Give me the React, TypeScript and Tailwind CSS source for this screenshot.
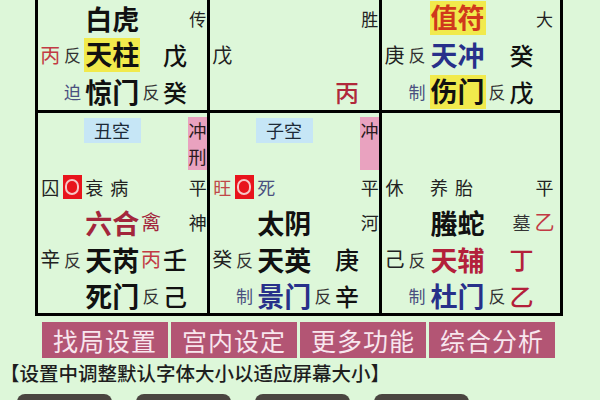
import React from "react";

type Slots = {
  a?: React.ReactNode;
  b?: React.ReactNode;
  c?: React.ReactNode;
  d?: React.ReactNode;
  e?: React.ReactNode;
  f?: React.ReactNode;
  h: string;
};

const font = { fontFamily: '"Noto Sans CJK SC", "Noto Sans", sans-serif' };

function Line({ a, b, c, d, e, f, h }: Slots) {
  return (
    <div className={`flex items-center pl-[2px] ${h}`}>
      <div className="w-[21px] flex justify-center">{a}</div>
      <div className="w-[24px] flex justify-center">{b}</div>
      <div className="w-[57px] flex justify-center">{c}</div>
      <div className="w-[22px] flex justify-center">{d}</div>
      <div className="w-[27px] flex justify-center">{e}</div>
      <div className="w-[19px] flex justify-center">{f}</div>
    </div>
  );
}

const Big = ({ children, cls = "text-[#111]" }: { children: React.ReactNode; cls?: string }) => (
  <span className={`text-[27px] leading-none font-bold ${cls}`}>{children}</span>
);
const Mid = ({ children, cls = "text-[#111]" }: { children: React.ReactNode; cls?: string }) => (
  <span className={`text-[24px] leading-none font-medium ${cls}`}>{children}</span>
);
const Side = ({ children, cls = "text-[#222]" }: { children: React.ReactNode; cls?: string }) => (
  <span className={`text-[20px] leading-none ${cls}`}>{children}</span>
);
const Small = ({ children, cls = "text-[#333]" }: { children: React.ReactNode; cls?: string }) => (
  <span className={`text-[17px] leading-none ${cls}`}>{children}</span>
);
const Tiny = ({ children, cls = "text-[#222]" }: { children: React.ReactNode; cls?: string }) => (
  <span className={`text-[18px] leading-none ${cls}`}>{children}</span>
);

const RedO = () => (
  <span className="w-[19px] h-[24px] bg-[#e8141c] flex items-center justify-center">
    <span className="w-[14px] h-[16px] rounded-full border-2 border-[#f6c6c6]" />
  </span>
);

const Hl = ({ children, cls = "" }: { children: React.ReactNode; cls?: string }) => (
  <span className={`px-[1px] py-[2px] bg-[#f1ea4c] ${cls}`}>{children}</span>
);

function TopCell({ lines, right }: { lines: Slots[]; right?: boolean }) {
  return (
    <div className={`w-[172px] h-[110px] border-black ${right ? "" : "border-r-[3px]"}`}>
      {lines.map((l, i) => (
        <Line key={i} {...l} />
      ))}
    </div>
  );
}

function BottomCell({
  kong,
  chong,
  lines,
  right,
}: {
  kong?: string;
  chong?: string[];
  lines: Slots[];
  right?: boolean;
}) {
  return (
    <div className={`w-[172px] h-[200px] border-black ${right ? "" : "border-r-[3px]"}`}>
      <div className="h-[57px] flex pl-[2px]">
        <div className="w-[45px]" />
        <div className="w-[57px] pt-[5px] flex justify-center">
          {kong && (
            <span className="w-[58px] h-[25px] bg-[#c6e6f6] flex items-center justify-center text-[18px] text-[#1c2a38]">
              {kong}
            </span>
          )}
        </div>
        <div className="w-[49px]" />
        <div className="w-[19px] pt-[4px] flex justify-center">
          {chong && (
            <span className="w-[19px] bg-[#e9a2bf] flex flex-col items-center text-[18px] leading-[26px] text-[#2a1a20]">
              {chong.map((c) => (
                <span key={c}>{c}</span>
              ))}
            </span>
          )}
        </div>
      </div>
      {lines.map((l, i) => (
        <Line key={i} {...l} />
      ))}
    </div>
  );
}

export default function App() {
  const blue = "text-[#27308a]";
  const grey = "text-[#4a5080]";
  const red = "text-[#c23a44]";
  const maroon = "text-[#a3263c]";
  const rowH = ["h-[34px]", "h-[36px]", "h-[38px]", "h-[35px]"];

  return (
    <div className="w-[600px] h-[400px] overflow-hidden bg-[#ddf7d9]" style={font}>
      <div className="ml-[35px] w-[528px] border-l-[3px] border-r-[3px] border-black">
        <div className="flex border-b-[3px] border-black">
          <TopCell
            lines={[
              { h: "h-[36px]", c: <Big>白虎</Big>, f: <Small cls="text-[#222]">传</Small> },
              {
                h: "h-[37px]",
                a: <Side cls={red}>丙</Side>,
                b: <Small>反</Small>,
                c: <Hl><Big>天柱</Big></Hl>,
                e: <Mid>戊</Mid>,
              },
              {
                h: "h-[37px]",
                b: <Small cls={grey}>迫</Small>,
                c: <Big>惊门</Big>,
                d: <Small>反</Small>,
                e: <Mid>癸</Mid>,
              },
            ]}
          />
          <TopCell
            lines={[
              { h: "h-[36px]", f: <Small cls="text-[#222]">胜</Small> },
              { h: "h-[37px]", a: <Side>戊</Side> },
              { h: "h-[37px]", e: <Mid cls="text-[#b0283a]">丙</Mid> },
            ]}
          />
          <TopCell
            right
            lines={[
              {
                h: "h-[36px]",
                c: <Hl><Big cls="text-[#d0381c]">值符</Big></Hl>,
                f: <Small cls="text-[#222]">大</Small>,
              },
              {
                h: "h-[37px]",
                a: <Side>庚</Side>,
                b: <Small>反</Small>,
                c: <Big cls={blue}>天冲</Big>,
                e: <Mid>癸</Mid>,
              },
              {
                h: "h-[37px]",
                b: <Small cls={grey}>制</Small>,
                c: <Hl><Big>伤门</Big></Hl>,
                d: <Small>反</Small>,
                e: <Mid>戊</Mid>,
              },
            ]}
          />
        </div>
        <div className="flex border-b-[3px] border-black">
          <BottomCell
            kong="丑空"
            chong={["冲", "刑"]}
            lines={[
              {
                h: rowH[0],
                a: <Tiny>囚</Tiny>,
                b: <RedO />,
                c: (
                  <span className="w-full flex gap-[7px] pl-[1px]">
                    <Tiny>衰</Tiny>
                    <Tiny>病</Tiny>
                  </span>
                ),
                f: <Tiny>平</Tiny>,
              },
              {
                h: rowH[1],
                c: <Big cls={maroon}>六合</Big>,
                d: <Side cls={maroon}>禽</Side>,
                f: <Tiny>神</Tiny>,
              },
              {
                h: rowH[2],
                a: <Side>辛</Side>,
                b: <Small>反</Small>,
                c: <Big>天芮</Big>,
                d: <Side cls={red}>丙</Side>,
                e: <Mid>壬</Mid>,
              },
              {
                h: rowH[3],
                c: <Big>死门</Big>,
                d: <Small>反</Small>,
                e: <Mid>己</Mid>,
              },
            ]}
          />
          <BottomCell
            kong="子空"
            chong={["冲"]}
            lines={[
              {
                h: rowH[0],
                a: <Tiny cls="text-[#c04848]">旺</Tiny>,
                b: <RedO />,
                c: (
                  <span className="w-full flex pl-[1px]">
                    <Tiny cls={grey}>死</Tiny>
                  </span>
                ),
                f: <Tiny>平</Tiny>,
              },
              { h: rowH[1], c: <Big>太阴</Big>, f: <Tiny>河</Tiny> },
              {
                h: rowH[2],
                a: <Side>癸</Side>,
                b: <Small>反</Small>,
                c: <Big>天英</Big>,
                e: <Mid>庚</Mid>,
              },
              {
                h: rowH[3],
                b: <Small cls={grey}>制</Small>,
                c: <Big cls={blue}>景门</Big>,
                d: <Small>反</Small>,
                e: <Mid>辛</Mid>,
              },
            ]}
          />
          <BottomCell
            right
            lines={[
              {
                h: rowH[0],
                a: <Tiny>休</Tiny>,
                c: (
                  <span className="w-full flex gap-[7px] pl-[1px]">
                    <Tiny>养</Tiny>
                    <Tiny>胎</Tiny>
                  </span>
                ),
                f: <Tiny>平</Tiny>,
              },
              {
                h: rowH[1],
                c: <Big>螣蛇</Big>,
                e: <Tiny cls="text-[#333]">墓</Tiny>,
                f: <Side cls={red}>乙</Side>,
              },
              {
                h: rowH[2],
                a: <Side>己</Side>,
                b: <Small>反</Small>,
                c: <Big cls="text-[#b3203a]">天辅</Big>,
                e: <Mid cls="text-[#b3203a]">丁</Mid>,
              },
              {
                h: rowH[3],
                b: <Small cls={grey}>制</Small>,
                c: <Big cls={blue}>杜门</Big>,
                d: <Small>反</Small>,
                e: <Mid cls="text-[#b3203a]">乙</Mid>,
              },
            ]}
          />
        </div>
      </div>

      <div className="mt-[6px] ml-[42px] flex gap-[3px]">
        {["找局设置", "宫内设定", "更多功能", "综合分析"].map((t) => (
          <div
            key={t}
            className="w-[126px] h-[36px] bg-[#b35574] flex items-center justify-center text-[25px] leading-none text-[#f8e6ee] tracking-[1px]"
          >
            {t}
          </div>
        ))}
      </div>

      <div className="mt-[2px] text-[19.5px] leading-[25px] font-medium text-[#1e1e1e] whitespace-nowrap">
        【设置中调整默认字体大小以适应屏幕大小】
      </div>

      <div className="mt-[9px] ml-[17px] flex gap-[24px]">
        {[0, 1, 2, 3].map((i) => (
          <div key={i} className="w-[95px] h-[30px] rounded-t-[8px] bg-[#4a4540]" />
        ))}
      </div>
    </div>
  );
}
